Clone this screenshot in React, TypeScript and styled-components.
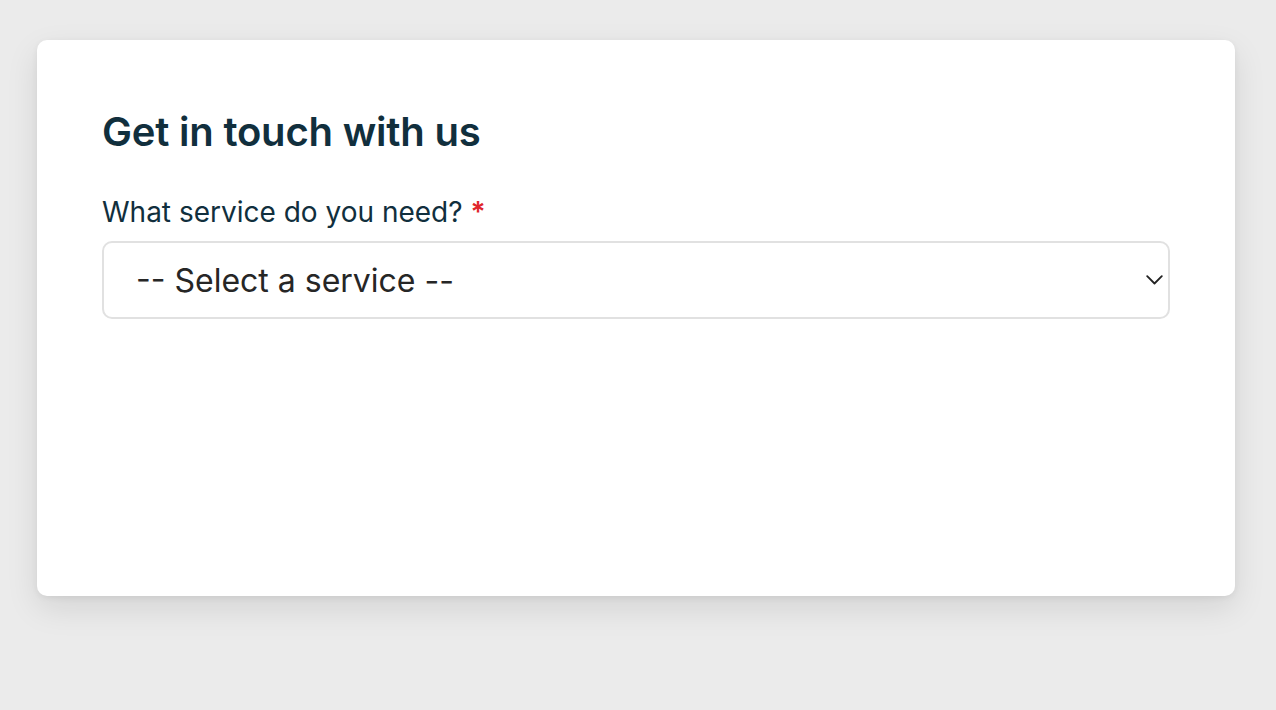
import React from "react";
import styled, { createGlobalStyle } from "styled-components";

const Global = createGlobalStyle`
  html, body { margin: 0; padding: 0; background: #ebebeb; }
  body { font-family: Inter, "Noto Sans", sans-serif; }
`;

const Page = styled.div`
  padding: 40px 41px 80px 37px;
`;

const Card = styled.div`
  background: #fff;
  border-radius: 10px;
  box-shadow: 0 12px 32px rgba(0, 0, 0, 0.1), 0 2px 6px rgba(0, 0, 0, 0.06);
  height: 556px;
  box-sizing: border-box;
  padding: 66px 65px 0 65px;
`;

const Title = styled.h1`
  margin: 0 0 38px;
  font-size: 40px;
  line-height: 52px;
  font-weight: 600;
  color: #112f3d;
  letter-spacing: -0.2px;
`;

const Field = styled.div`
  display: flex;
  flex-direction: column;
  gap: 13px;
`;

const Label = styled.label`
  font-size: 28px;
  line-height: 32px;
  font-weight: 400;
  color: #112f3d;
`;

const Req = styled.span`
  color: #e0262b;
  font-weight: 600;
`;

const SelectWrap = styled.div`
  height: 78px;
  box-sizing: border-box;
  border: 2px solid #e1e1e1;
  border-radius: 10px;
  display: flex;
  align-items: center;
  padding: 0 5px 0 32px;
`;

const SelectText = styled.span`
  font-size: 32px;
  color: #262626;
  flex: 1;
`;

const Chevron = styled.svg`
  width: 17px;
  height: 10px;
  flex: none;
`;

export default function App() {
  return (
    <>
      <Global />
      <Page>
        <Card>
          <Title>Get in touch with us</Title>
          <Field>
            <Label>
              What service do you need? <Req>*</Req>
            </Label>
            <SelectWrap>
              <SelectText>-- Select a service --</SelectText>
              <Chevron viewBox="0 0 17 10" fill="none" stroke="#222" strokeWidth="1.8" strokeLinecap="round" strokeLinejoin="round">
                <path d="M1.2 1.2l7.3 7.3 7.3-7.3" />
              </Chevron>
            </SelectWrap>
          </Field>
        </Card>
      </Page>
    </>
  );
}
